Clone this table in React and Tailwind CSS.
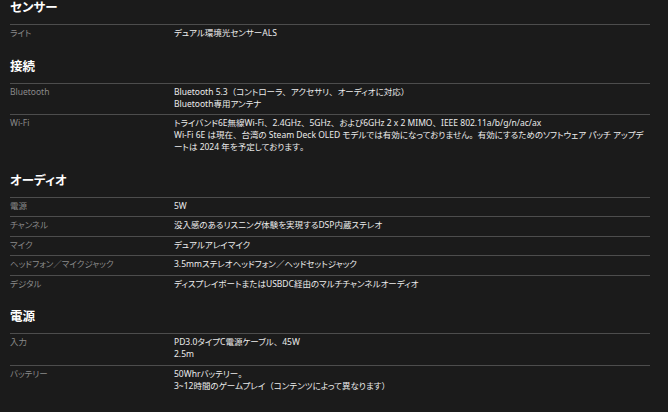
import React from 'react'

const sections = [
  {
    title: 'センサー',
    rows: [{ label: 'ライト', value: ['デュアル環境光センサーALS'] }],
  },
  {
    title: '接続',
    rows: [
      { label: 'Bluetooth', value: ['Bluetooth 5.3（コントローラ、アクセサリ、オーディオに対応）', 'Bluetooth専用アンテナ'] },
      {
        label: 'Wi-Fi',
        value: [
          'トライバンド6E無線Wi-Fi、2.4GHz、5GHz、および6GHz 2 x 2 MIMO、IEEE 802.11a/b/g/n/ac/ax',
          'Wi-Fi 6E は現在、台湾の Steam Deck OLED モデルでは有効になっておりません。有効にするためのソフトウェア パッチ アップデ',
          'ートは 2024 年を予定しております。',
        ],
      },
    ],
  },
  {
    title: 'オーディオ',
    rows: [
      { label: '電源', value: ['5W'] },
      { label: 'チャンネル', value: ['没入感のあるリスニング体験を実現するDSP内蔵ステレオ'] },
      { label: 'マイク', value: ['デュアルアレイマイク'] },
      { label: 'ヘッドフォン／マイクジャック', value: ['3.5mmステレオヘッドフォン／ヘッドセットジャック'] },
      { label: 'デジタル', value: ['ディスプレイポートまたはUSBDC経由のマルチチャンネルオーディオ'] },
    ],
  },
  {
    title: '電源',
    rows: [
      { label: '入力', value: ['PD3.0タイプC電源ケーブル、45W', '2.5m'] },
      { label: 'バッテリー', value: ['50Whrバッテリー。', '3~12時間のゲームプレイ（コンテンツによって異なります）'] },
    ],
  },
]

// punctuation keeps its full width, kana stay proportional
function Jp({ text }) {
  const parts = text.split(/([、。（）])/)
  return parts.map((p, i) =>
    /^[、。（）]$/.test(p) ? (
      <span key={i} className="[font-feature-settings:normal]">{p}</span>
    ) : (
      <React.Fragment key={i}>{p}</React.Fragment>
    )
  )
}

export default function App() {
  return (
    <div className="w-[668px] h-[412px] overflow-hidden bg-[#1b1b1b] px-[10px] pt-[1px] [font-family:'Noto_Sans','Noto_Sans_CJK_JP',sans-serif] [font-feature-settings:'palt']">
      <div className="w-[640px]">
        {sections.map((s, i) => (
          <div key={s.title} className={i === 0 ? '' : 'mt-[16px]'}>
            <h2 className="text-[12.5px] leading-[14px] font-bold text-white mb-[9px]">{s.title}</h2>
            {s.rows.map((r) => (
              <div key={r.label} className="grid grid-cols-[164px_1fr] pt-[2px] pb-[4.5px] border-t border-[#4d4d4d]">
                <div className="text-[8.5px] leading-[12px] text-[#8a8a8a]">{r.label}</div>
                <div className="text-[8.5px] leading-[12px] text-[#ececec]">
                  {r.value.map((v, j) => (
                    <div key={j} className="whitespace-nowrap">
                      <Jp text={v} />
                    </div>
                  ))}
                </div>
              </div>
            ))}
          </div>
        ))}
      </div>
    </div>
  )
}
